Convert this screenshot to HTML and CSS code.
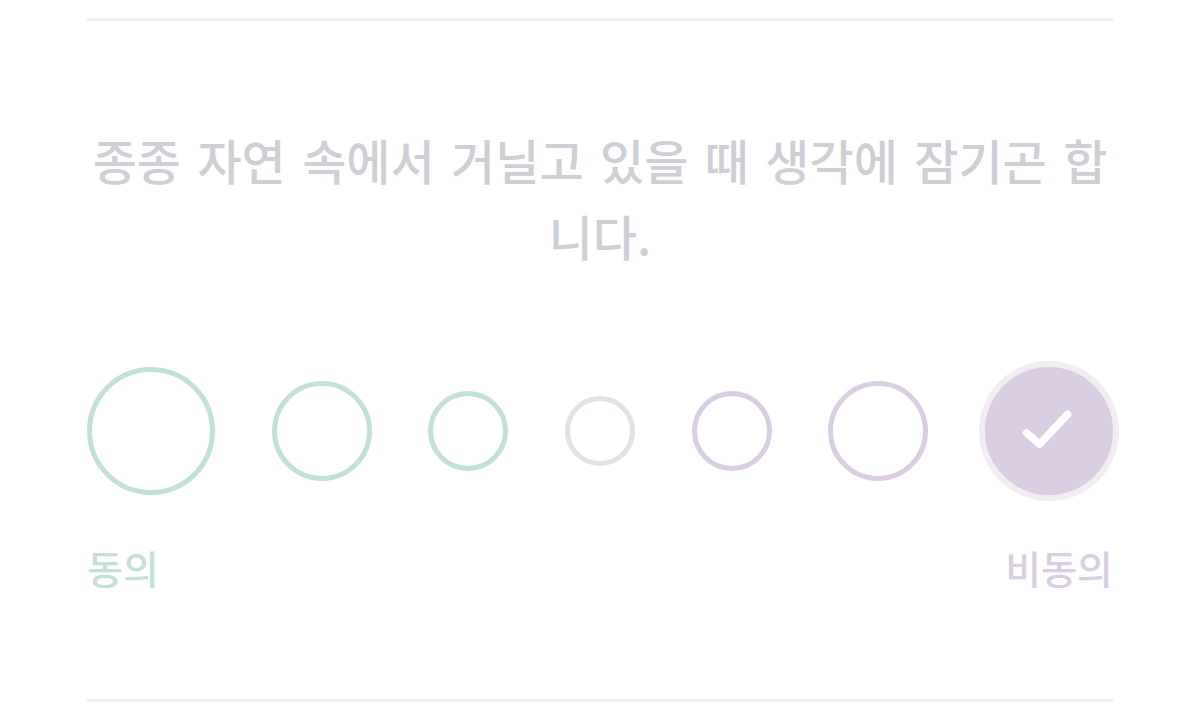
FILE: index.html
```html
<!DOCTYPE html>
<html lang="ko">
<head>
<meta charset="utf-8">
<link rel="stylesheet" href="styles.css">
</head>
<body>
<div class="wrap">
  <div class="rule rule-top"></div>
  <p class="question">종종 자연 속에서 거닐고 있을 때 생각에 잠기곤 합니다.</p>
  <div class="scale">
    <span class="dot agree d1"></span>
    <span class="dot agree d2"></span>
    <span class="dot agree d3"></span>
    <span class="dot neutral d4"></span>
    <span class="dot disagree d3"></span>
    <span class="dot disagree d2"></span>
    <span class="dot disagree d1 selected">
      <svg class="check" viewBox="0 0 64 64" width="64" height="64">
        <path d="M8 34 L22 46 L52 14" fill="none" stroke="#fff" stroke-width="8" stroke-linecap="round" stroke-linejoin="round"/>
      </svg>
    </span>
  </div>
  <div class="labels">
    <span class="label label-agree">동의</span>
    <span class="label label-disagree">비동의</span>
  </div>
  <div class="rule rule-bottom"></div>
</div>
</body>
</html>
```
FILE: styles.css
```css
html, body {
  margin: 0;
  padding: 0;
  background: #ffffff;
}
body {
  font-family: "Noto Sans CJK KR", "Noto Sans", sans-serif;
}
.wrap {
  width: 1026px;
  margin: 0 auto;
  display: flex;
  flex-direction: column;
}
.rule {
  height: 3px;
  background: #f1f1f3;
}
.rule-top {
  margin-top: 18px;
}
.question {
  margin: 100px 0 0;
  font-size: 48px;
  line-height: 76px;
  font-weight: 500;
  word-spacing: 3px;
  color: #cfd0d6;
  text-align: center;
}
.scale {
  margin-top: 94px;
  display: flex;
  justify-content: space-between;
  align-items: center;
  height: 128px;
}
.dot {
  box-sizing: border-box;
  border-radius: 50%;
  border: 5px solid;
  display: flex;
  align-items: center;
  justify-content: center;
}
.d1 { width: 128px; height: 128px; }
.d2 { width: 100px; height: 100px; }
.d3 { width: 80px; height: 80px; }
.d4 { width: 70px; height: 70px; }
.agree { border-color: #c4e1d5; }
.neutral { border-color: #e1e2e6; }
.disagree { border-color: #dacfe2; }
.selected {
  background: #dacfe2;
  box-shadow: 0 0 0 6px #f2ecf3;
}
.check {
  width: 60px;
  height: 60px;
}
.labels {
  margin-top: 52px;
  display: flex;
  justify-content: space-between;
}
.label {
  font-size: 39px;
  line-height: 40px;
  font-weight: 500;
}
.label-agree { color: #c4e1d5; }
.label-disagree { color: #dacfe2; }
.rule-bottom {
  margin-top: 112px;
}
```
